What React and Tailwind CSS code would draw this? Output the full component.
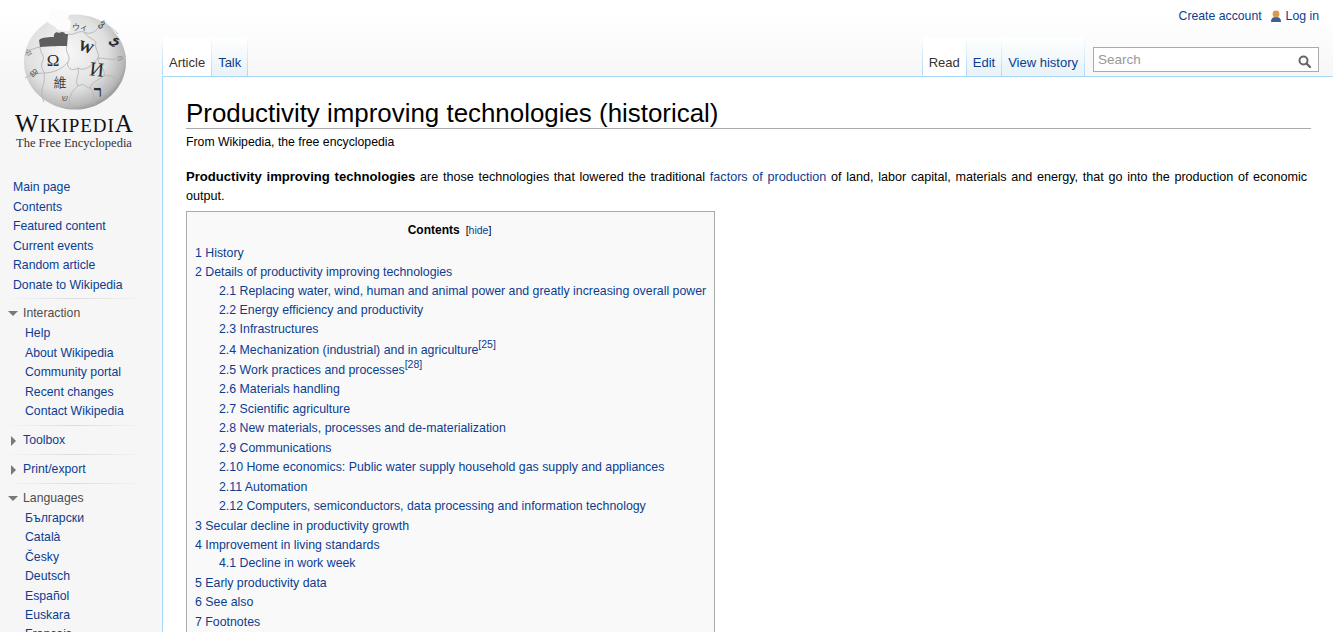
const mainLinks = ['Main page', 'Contents', 'Featured content', 'Current events', 'Random article', 'Donate to Wikipedia']
const interaction = ['Help', 'About Wikipedia', 'Community portal', 'Recent changes', 'Contact Wikipedia']
const languages = ['Български', 'Català', 'Česky', 'Deutsch', 'Español', 'Euskara', 'Français']

const toc = [
  { t: '1 History', tight: true },
  { t: '2 Details of productivity improving technologies', tight: true },
  { t: '2.1 Replacing water, wind, human and animal power and greatly increasing overall power', sub: true, tight: true },
  { t: '2.2 Energy efficiency and productivity', sub: true, tight: true },
  { t: '2.3 Infrastructures', sub: true, tight: true },
  { t: '2.4 Mechanization (industrial) and in agriculture', sub: true, sup: '[25]' },
  { t: '2.5 Work practices and processes', sub: true, sup: '[28]', gap: true },
  { t: '2.6 Materials handling', sub: true },
  { t: '2.7 Scientific agriculture', sub: true },
  { t: '2.8 New materials, processes and de-materialization', sub: true },
  { t: '2.9 Communications', sub: true },
  { t: '2.10 Home economics: Public water supply household gas supply and appliances', sub: true },
  { t: '2.11 Automation', sub: true },
  { t: '2.12 Computers, semiconductors, data processing and information technology', sub: true },
  { t: '3 Secular decline in productivity growth' },
  { t: '4 Improvement in living standards' },
  { t: '4.1 Decline in work week', sub: true, short: true },
  { t: '5 Early productivity data' },
  { t: '6 See also' },
  { t: '7 Footnotes' },
]

function Globe() {
  return (
    <svg width="110" height="102" viewBox="0 0 110 102" className="block">
      <defs>
        <radialGradient id="ball" cx="0.42" cy="0.4" r="0.66">
          <stop offset="0" stopColor="#f8f8f8" />
          <stop offset="0.6" stopColor="#e0e0e0" />
          <stop offset="0.86" stopColor="#b8b8b8" />
          <stop offset="1" stopColor="#858585" />
        </radialGradient>
      </defs>
      <ellipse cx="55" cy="52" rx="51" ry="47.5" fill="url(#ball)" />
      {/* missing puzzle piece at the top */}
      <path d="M31 0 L28 12 C30 16 34 14 36 18 C38 22 46 20 50 21 C50 15 53 11 48 9 L50 0 Z" fill="#fcfcfc" />
      <path d="M19 30 C22 27 30 27 34 27 C33 23 37 21 39 23 C42 21 45 22 45 24 L48 24 L47 36 C40 36 30 36 20 37 Z" fill="#5e5e5e" />
      <g fill="none" stroke="#b4b4b4" strokeWidth="0.9">
        <path d="M6 40 C12 41 16 37 20 37" />
        <path d="M48 24 C54 26 58 20 64 22 C72 26 78 20 84 10" />
        <path d="M47 36 C44 42 52 46 48 52 C46 58 52 62 58 58 C64 62 72 56 78 48 C86 48 96 52 106 46" />
        <path d="M20 37 C20 44 26 46 22 52 C20 60 26 62 24 66" />
        <path d="M5 68 C14 62 24 64 32 62 C40 60 44 56 48 52" />
        <path d="M58 58 C60 66 54 70 58 76 C50 82 48 90 50 99" />
        <path d="M24 66 C26 74 18 80 24 92" />
        <path d="M64 22 C68 28 72 28 76 32 C74 40 80 42 78 48" />
        <path d="M78 48 C78 56 86 58 84 66 C78 70 72 72 70 78 C76 84 72 90 76 96" />
        <path d="M84 66 C92 64 98 70 102 72" />
        <path d="M58 76 C64 72 66 78 70 78" />
        <path d="M84 10 C88 18 94 18 98 24" />
      </g>
      <g fontFamily="'Liberation Serif', serif" fill="#2b2b2b" textAnchor="middle">
        <text x="33" y="56" fontSize="17">Ω</text>
        <text x="66" y="42" fontSize="15" fontWeight="bold" transform="rotate(20 66 37)">W</text>
        <text x="77" y="66" fontSize="20" transform="rotate(6 77 59)">И</text>
        <text x="40" y="77" fontSize="13" fill="#444" fontFamily="'Noto Sans CJK TC', sans-serif">維</text>
        <text x="78" y="87" fontSize="17" fontWeight="bold">ר</text>
        <text x="60" y="20" fontSize="8" fill="#444" fontFamily="'Noto Sans CJK JP', sans-serif">ウィ</text>
        <text x="94" y="34" fontSize="13" fontWeight="bold" fontFamily="'DejaVu Sans', sans-serif">ي</text>
        <text x="83" y="17" fontSize="10" fill="#333" fontFamily="'DejaVu Sans', sans-serif" transform="rotate(35 83 13)">ვ</text>
        <text x="9" y="46" fontSize="9" fill="#666" fontFamily="'DejaVu Sans', sans-serif" transform="rotate(-75 9 43)">ক</text>
        <text x="13" y="66" fontSize="10" fill="#666" fontFamily="'DejaVu Sans', sans-serif" transform="rotate(-40 13 63)">ജ</text>
        <text x="45" y="91" fontSize="9" fill="#666" fontFamily="'DejaVu Sans', sans-serif">ש</text>
        <text x="100" y="51" fontSize="9" fill="#888" fontFamily="'DejaVu Sans', sans-serif" transform="rotate(80 100 48)">ก</text>
      </g>
    </svg>
  )
}

function PortalHead({ open, children }) {
  return (
    <div className={`flex items-center h-[19px] ${open ? 'text-[#4d4d4d]' : 'text-[#0b3d91]'}`}>
      {open ? (
        <span className="ml-2 mr-[5px] w-0 h-0 border-x-[5px] border-x-transparent border-t-[5px] border-t-[#797979]" />
      ) : (
        <span className="ml-[11px] mr-[7px] w-0 h-0 border-y-[5px] border-y-transparent border-l-[5px] border-l-[#797979]" />
      )}
      {children}
    </div>
  )
}

function Separator() {
  return <div className="h-px ml-[5px] w-[140px] bg-[linear-gradient(to_right,#f6f6f6,#dcdcdc_50%,#f6f6f6)]" />
}

function Sidebar() {
  return (
    <aside className="w-[162px] shrink-0 text-[12.25px] leading-[19.5px]">
      <div className="h-[178px]">
        <div className="pt-[10px] pl-5">
          <Globe />
        </div>
        <div className="pl-[15px] w-[140px] font-['Liberation_Serif',serif] text-[#111] leading-none">
          <div className="text-[25px] leading-[24px] tracking-[0.95px] whitespace-nowrap">
            W<span className="text-[19px]">IKIPEDI</span>A
          </div>
          <div className="-mt-[2px] text-[12.5px] leading-[14px] text-[#333] whitespace-nowrap pl-px">The Free Encyclopedia</div>
        </div>
      </div>
      <div className="text-[#0b3d91] pl-[13px] h-[120px]">
        {mainLinks.map(l => <div key={l}>{l}</div>)}
      </div>
      <Separator />
      <div className="pt-[5px] h-[126px]">
        <PortalHead open>Interaction</PortalHead>
        <div className="pl-[25px] pt-[1px] text-[#0b3d91]">
          {interaction.map(l => <div key={l}>{l}</div>)}
        </div>
      </div>
      <Separator />
      <div className="pt-[5px] h-[28px]"><PortalHead>Toolbox</PortalHead></div>
      <Separator />
      <div className="pt-[5px] h-[28px]"><PortalHead>Print/export</PortalHead></div>
      <Separator />
      <div className="pt-[5px]">
        <PortalHead open>Languages</PortalHead>
        <div className="pl-[25px] pt-[1px] text-[#0b3d91] leading-[19.4px]">
          {languages.map(l => <div key={l}>{l}</div>)}
        </div>
      </div>
    </aside>
  )
}

function Tab({ active, children }) {
  return (
    <div className={`h-[39px] pt-[17px] px-[6px] mb-[-1px] border-r border-transparent [border-image:linear-gradient(to_bottom,#fff,#a7d7f9)_1] text-[13px] leading-[18px] ${active ? 'bg-white text-[#333]' : 'bg-[linear-gradient(to_bottom,#fff,#e8f2f8)] text-[#0b3d91]'}`}>
      {children}
    </div>
  )
}

function TocLine({ item }) {
  let rowClass = 'leading-[19.5px]'
  if (item.tight) rowClass = 'leading-[19px]'
  if (item.short) rowClass = 'leading-[15px] mb-[2.75px]'
  if (item.sup) rowClass = item.gap ? 'h-[21px] leading-[23px]' : 'h-[20px] leading-[23px]'
  return (
    <div className={`whitespace-nowrap ${item.sub ? 'pl-6' : ''} ${rowClass}`}>
      {item.t}
      {item.sup && <sup className="text-[10.5px] leading-none align-[6px] top-0">{item.sup}</sup>}
    </div>
  )
}

export default function App() {
  return (
    <div className="flex h-[632px] overflow-hidden bg-[#f6f6f6] bg-[linear-gradient(#fff_15px,#f6f6f6_80px)] font-['Liberation_Sans',Arial,sans-serif] text-black">
      <Sidebar />
      <div className="flex-1 min-w-0 flex flex-col">
        <header className="h-[77px] shrink-0 border-b border-[#a7d7f9] flex flex-col">
          <div className="flex justify-end items-center gap-2 h-[31px] pt-[2px] pr-[14px] text-[12.25px] text-[#0b3d91]">
            <span>Create account</span>
            <span className="flex items-center gap-[4px]">
              <svg width="12" height="13" viewBox="0 0 12 13">
                <path d="M1 12 C1 8 3 7 6 7 C9 7 11 8 11 12 Z" fill="#3f5f8f" />
                <circle cx="6" cy="4" r="3.4" fill="#d99a4e" />
              </svg>
              Log in
            </span>
          </div>
          <div className="flex-1 flex items-start justify-between">
            <div className="flex border-l border-transparent [border-image:linear-gradient(to_bottom,#fff,#a7d7f9)_1] mt-[6px]">
              <Tab active>Article</Tab>
              <Tab>Talk</Tab>
            </div>
            <div className="flex items-start mt-[6px]">
              <div className="flex border-l border-transparent [border-image:linear-gradient(to_bottom,#fff,#a7d7f9)_1]">
                <Tab active>Read</Tab>
                <Tab>Edit</Tab>
                <Tab>View history</Tab>
              </div>
              <div className="w-[226px] h-[25px] ml-2 mr-[14px] mt-[10px] border border-[#aaa] bg-white flex items-start justify-between pl-1 pr-[7px] text-[13.5px] text-[#999] leading-[24px]">
                Search
                <svg width="13" height="13" viewBox="0 0 13 13" className="mt-[7px]">
                  <circle cx="5.5" cy="5.5" r="4" fill="none" stroke="#666" strokeWidth="2" />
                  <path d="M8.5 8.5 L12 12" stroke="#666" strokeWidth="2.4" strokeLinecap="round" />
                </svg>
              </div>
            </div>
          </div>
        </header>
        <main className="flex-1 min-h-0 overflow-hidden bg-white border-l border-[#a7d7f9] pl-[23px] pr-[22px] pt-[21px] text-[12.35px] leading-[19.2px]">
          <h1 className="text-[25.9px] leading-[30px] border-b border-[#aaa] text-black whitespace-nowrap">Productivity improving technologies (historical)</h1>
          <div className="mt-[3px] h-[35px] leading-[20px] text-[12.25px]">From Wikipedia, the free encyclopedia</div>
          <p className="pr-[4px] text-[12.6px]">
            <span className="block text-justify [text-align-last:justify]">
              <b className="text-[13.1px]">Productivity improving technologies</b> are those technologies that lowered the traditional <span className="text-[#0b3d91]">factors of production</span> of land, labor capital, materials and energy, that go into the production of economic
            </span>
            <span className="block">output.</span>
          </p>
          <div className="mt-[5px] w-[529px] border border-[#aaa] bg-[#f9f9f9] px-2 pt-[9px] pb-4 text-[#0b3d91]">
            <div className="text-center text-black h-[23px] leading-[18px] pr-[2px] text-[12px]">
              <b>Contents</b>
              <span className="ml-[6px] text-[10.5px]">[<span className="text-[#0b3d91]">hide</span>]</span>
            </div>
            {toc.map(item => <TocLine key={item.t} item={item} />)}
          </div>
        </main>
      </div>
    </div>
  )
}
